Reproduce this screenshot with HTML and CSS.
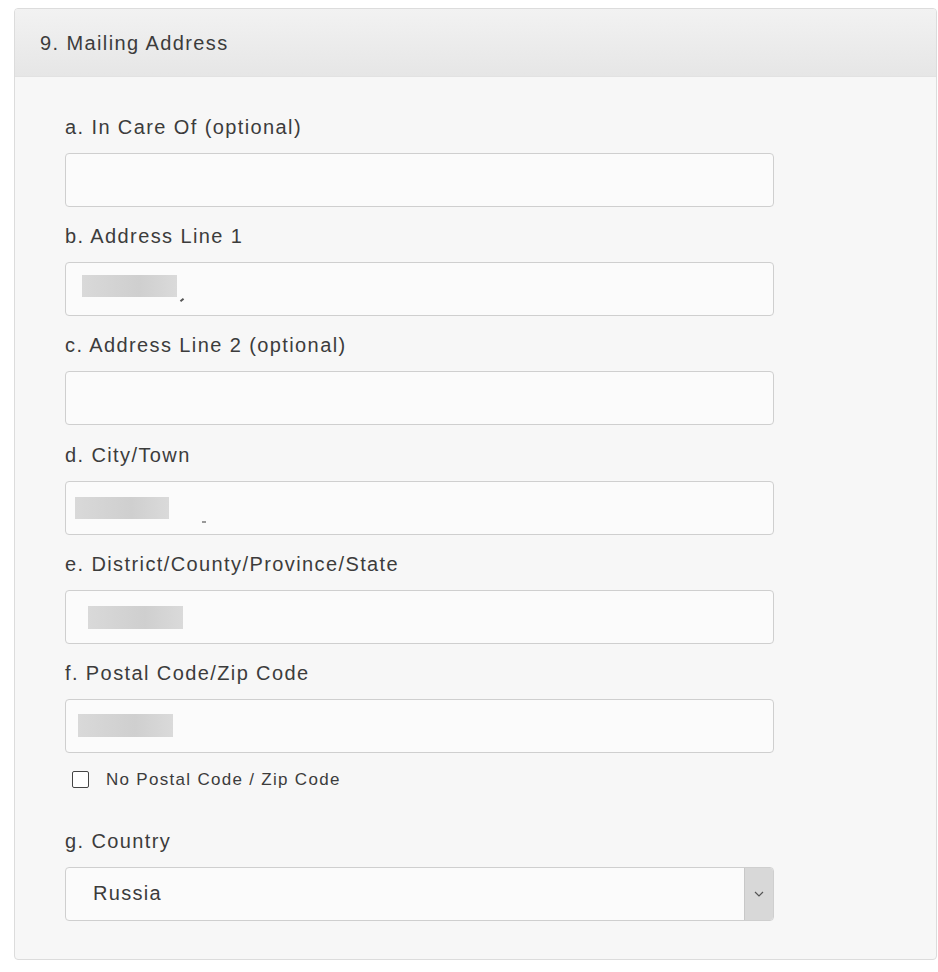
FILE: index.html
```html
<!DOCTYPE html>
<html>
<head>
<meta charset="utf-8">
<link rel="stylesheet" href="styles.css">
</head>
<body>
<div class="panel">
  <div class="panel-heading">9. Mailing Address</div>
  <div class="panel-body">
    <div class="group">
      <div class="label">a. In Care Of (optional)</div>
      <div class="input"></div>
    </div>
    <div class="group">
      <div class="label">b. Address Line 1</div>
      <div class="input"><span class="blur b2"></span><span class="mark m2"></span></div>
    </div>
    <div class="group">
      <div class="label">c. Address Line 2 (optional)</div>
      <div class="input"></div>
    </div>
    <div class="group">
      <div class="label">d. City/Town</div>
      <div class="input"><span class="blur b4"></span><span class="mark m4"></span></div>
    </div>
    <div class="group">
      <div class="label">e. District/County/Province/State</div>
      <div class="input"><span class="blur b5"></span></div>
    </div>
    <div class="group last">
      <div class="label">f. Postal Code/Zip Code</div>
      <div class="input"><span class="blur b6"></span></div>
    </div>
    <div class="check-row">
      <span class="checkbox"></span>
      <span class="check-label">No Postal Code / Zip Code</span>
    </div>
    <div class="group">
      <div class="label">g. Country</div>
      <div class="select">
        <span class="select-value">Russia</span>
        <span class="select-arrow">
          <svg width="10" height="6" viewBox="0 0 10 6"><path d="M1 1 L5 5 L9 1" fill="none" stroke="#555" stroke-width="1.2"/></svg>
        </span>
      </div>
    </div>
  </div>
</div>
</body>
</html>
```
FILE: styles.css
```css
html, body {
  margin: 0;
  padding: 0;
  background: #ffffff;
}
body {
  padding: 8px 1px 0 14px;
  font-family: "Liberation Sans", Arial, sans-serif;
  color: #3c3c3c;
}
.panel {
  border: 1px solid #dcdcdc;
  border-radius: 4px;
  background: #f7f7f7;
  overflow: hidden;
}
.panel-heading {
  height: 68px;
  box-sizing: border-box;
  padding: 22px 0 0 25px;
  font-size: 20px;
  line-height: 24px;
  letter-spacing: 1.4px;
  color: #3c3c3c;
  background: linear-gradient(#f2f2f2, #e6e6e6);
  border-bottom: 1px solid #e2e2e2;
}
.panel-body {
  padding: 38px 0 38px 50px;
}
.group {
  margin-bottom: 17.2px;
}
.group.last {
  margin-bottom: 0;
}
.group:last-child {
  margin-bottom: 0;
}
.label {
  font-size: 20px;
  line-height: 24px;
  letter-spacing: 1.4px;
  color: #3c3c3c;
  margin-bottom: 14px;
}
.input, .select {
  width: 709px;
  height: 54px;
  box-sizing: border-box;
  border: 1px solid #cfcfcf;
  border-radius: 4px;
  background: #fbfbfb;
  position: relative;
}
.blur {
  position: absolute;
  height: 22px;
  background: linear-gradient(90deg, #d9d9d9 0%, #d3d3d3 35%, #cfcfcf 60%, #dadada 100%);
}
.b2 { left: 16px; top: 12px; width: 95px; }
.b4 { left: 9px; top: 15px; width: 94px; height: 22px; }
.b5 { left: 22px; top: 15px; width: 95px; height: 23px; }
.b6 { left: 12px; top: 14px; width: 95px; height: 23px; }
.mark {
  position: absolute;
  width: 4px;
  height: 2px;
  background: #555;
}
.m2 { left: 114px; top: 36px; transform: rotate(-40deg); }
.m4 { left: 136px; top: 39px; background: #999; }
.check-row {
  display: flex;
  align-items: center;
  margin: 17px 0 39px 7px;
  height: 20px;
}
.checkbox {
  width: 17px;
  height: 17px;
  box-sizing: border-box;
  border: 1.5px solid #444;
  border-radius: 2px;
  background: #fff;
}
.check-label {
  margin-left: 17px;
  font-size: 17px;
  letter-spacing: 1.3px;
  color: #3c3c3c;
}
.select {
  display: flex;
  align-items: center;
  overflow: hidden;
}
.select-value {
  flex: 1;
  padding-left: 27px;
  font-size: 20px;
  letter-spacing: 1.3px;
  color: #3c3c3c;
}
.select-arrow {
  width: 28px;
  align-self: stretch;
  display: flex;
  align-items: center;
  justify-content: center;
  background: #d8d8d8;
  border-left: 1px solid #c8c8c8;
}
```
